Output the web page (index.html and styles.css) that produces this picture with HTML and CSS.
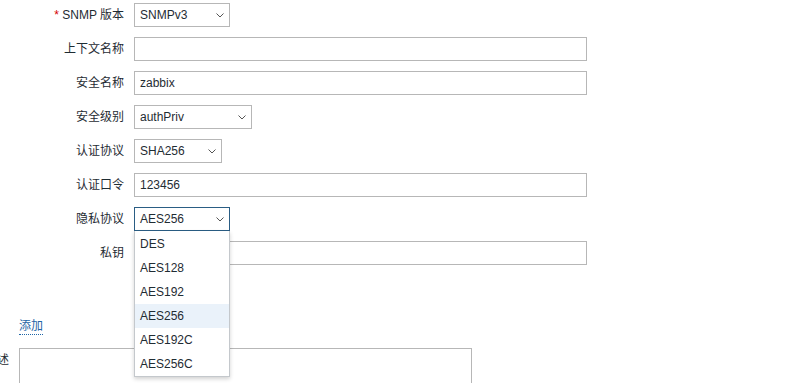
FILE: index.html
```html
<!DOCTYPE html>
<html lang="zh">
<head>
<meta charset="utf-8">
<link rel="stylesheet" href="styles.css">
</head>
<body>
<div class="page">
  <div class="iface">
    <div class="label"><span class="req">*</span> SNMP 版本</div>
    <div class="field"><div class="select w96"><span>SNMPv3</span><svg class="chev" width="8" height="5" viewBox="0 0 8 5"><path d="M0.5 0.5 L4 4 L7.5 0.5" fill="none" stroke="#555" stroke-width="1"/></svg></div></div>

    <div class="label">上下文名称</div>
    <div class="field"><div class="input"></div></div>

    <div class="label">安全名称</div>
    <div class="field"><div class="input">zabbix</div></div>

    <div class="label">安全级别</div>
    <div class="field"><div class="select w118"><span>authPriv</span><svg class="chev" width="8" height="5" viewBox="0 0 8 5"><path d="M0.5 0.5 L4 4 L7.5 0.5" fill="none" stroke="#555" stroke-width="1"/></svg></div></div>

    <div class="label">认证协议</div>
    <div class="field"><div class="select w88"><span>SHA256</span><svg class="chev" width="8" height="5" viewBox="0 0 8 5"><path d="M0.5 0.5 L4 4 L7.5 0.5" fill="none" stroke="#555" stroke-width="1"/></svg></div></div>

    <div class="label">认证口令</div>
    <div class="field"><div class="input">123456</div></div>

    <div class="label">隐私协议</div>
    <div class="field dd-host">
      <div class="select w96 focused"><span>AES256</span><svg class="chev" width="8" height="5" viewBox="0 0 8 5"><path d="M0.5 0.5 L4 4 L7.5 0.5" fill="none" stroke="#555" stroke-width="1"/></svg></div>
      <ul class="dropdown">
        <li>DES</li>
        <li>AES128</li>
        <li>AES192</li>
        <li class="hover">AES256</li>
        <li>AES192C</li>
        <li>AES256C</li>
      </ul>
    </div>

    <div class="label">私钥</div>
    <div class="field"><div class="input"></div></div>
  </div>

  <div class="outer add-row">
    <div class="olabel"></div>
    <div class="ofield"><a class="link">添加</a></div>
  </div>
  <div class="outer desc">
    <div class="olabel"><span class="otext">描述</span></div>
    <div class="ofield"><div class="textarea"></div></div>
  </div>
</div>
</body>
</html>
```

FILE: styles.css
```css
html, body {
  margin: 0;
  padding: 0;
  background: #ffffff;
}
body {
  font-family: "Liberation Sans", Arial, "Noto Sans CJK SC", sans-serif;
  font-size: 12px;
  color: #1f2c33;
  overflow: hidden;
  height: 383px;
}
.page {
  padding-top: 3px;
}
.iface {
  display: grid;
  grid-template-columns: 124px 453px;
  column-gap: 10px;
  row-gap: 10px;
}
.label {
  text-align: right;
  height: 24px;
  line-height: 24px;
  white-space: nowrap;
}
.req {
  color: #d40000;
}
.field {
  height: 24px;
  display: flex;
}
.input {
  box-sizing: border-box;
  width: 453px;
  height: 24px;
  border: 1px solid #b7b7b7;
  background: #fff;
  padding: 0 5px;
  line-height: 22px;
}
.select {
  box-sizing: border-box;
  height: 24px;
  border: 1px solid #b7b7b7;
  background: #fff;
  padding: 0 5px;
  line-height: 22px;
  display: flex;
  align-items: center;
  justify-content: space-between;
}
.select.focused {
  border-color: #2a5d84;
}
.w96 { width: 96px; }
.w118 { width: 118px; }
.w88 { width: 88px; }
.chev {
  display: block;
}
.dd-host {
  position: relative;
}
.dropdown {
  position: absolute;
  left: 0;
  top: 24px;
  width: 96px;
  box-sizing: border-box;
  margin: 0;
  padding: 1px 0 0;
  list-style: none;
  background: #fff;
  border: 1px solid #c4c8cc;
  border-top: none;
  box-shadow: 0 2px 4px rgba(0, 0, 0, 0.18);
  z-index: 5;
}
.dropdown li {
  height: 24px;
  line-height: 25px;
  padding: 0 5px;
}
.dropdown li.hover {
  background: #eaf2fa;
}
.outer {
  display: flex;
  column-gap: 10px;
}
.olabel {
  width: 9px;
  flex: none;
  display: flex;
  justify-content: flex-end;
}
.otext {
  white-space: nowrap;
  flex: none;
}
.ofield {
  display: flex;
}
.add-row {
  margin-top: 54px;
  height: 16px;
  line-height: 16px;
}
.link {
  color: #1f65a6;
  border-bottom: 1px dotted #1f65a6;
  line-height: 14px;
  cursor: pointer;
}
.desc {
  margin-top: 13px;
}
.desc .olabel {
  padding-top: 5px;
  line-height: 14px;
}
.textarea {
  box-sizing: border-box;
  width: 453px;
  height: 60px;
  border: 1px solid #b7b7b7;
  background: #fff;
}
```
